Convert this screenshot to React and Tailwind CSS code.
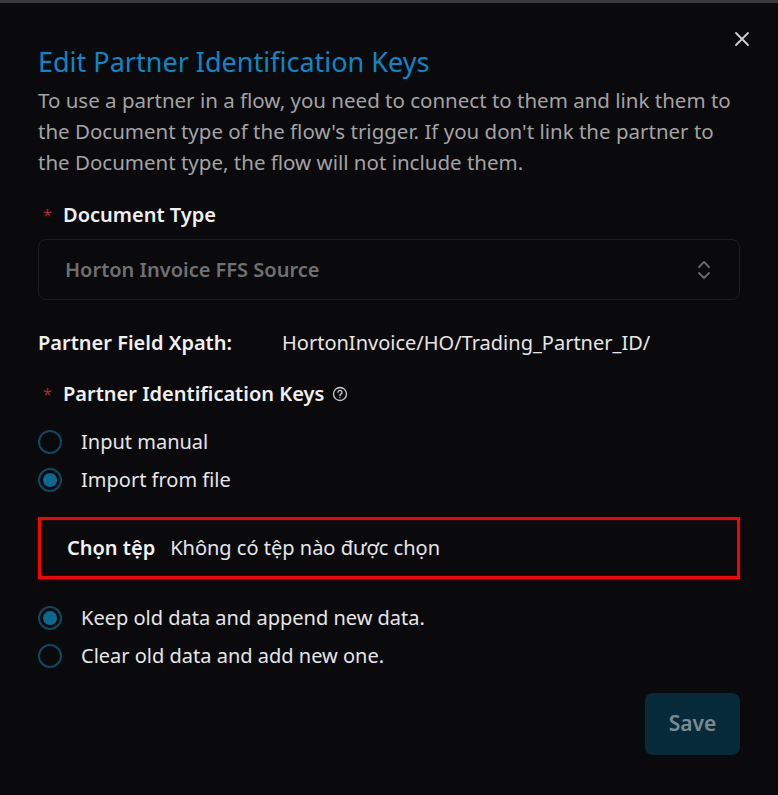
import React from "react";

function Radio({ checked, label }) {
  return (
    <label className="flex items-center gap-[19px] h-[38px]">
      <span className="w-[24px] h-[24px] rounded-full border-2 border-[#0c4a63] flex items-center justify-center shrink-0">
        {checked && <span className="w-[14px] h-[14px] rounded-full bg-[#0b6a92]" />}
      </span>
      <span className="text-[20px] text-[#e6e6e6]">{label}</span>
    </label>
  );
}

export default function App() {
  return (
    <div
      className="w-[778px] h-[795px] bg-[#0a0a0c] border-t-[3px] border-[#3a3a3c] relative"
      style={{ fontFamily: '"Noto Sans", "Open Sans", sans-serif' }}
    >
      <button className="absolute right-[28px] top-[28px] text-[#cfcfcf]">
        <svg width="16" height="16" viewBox="0 0 16 16" fill="none" stroke="currentColor" strokeWidth="1.8" strokeLinecap="round">
          <path d="M2 2L14 14M14 2L2 14" />
        </svg>
      </button>
      <div className="px-[38px] pt-[42px]">
        <h2 className="text-[27px] leading-[34px] text-[#0b87c8] font-normal">Edit Partner Identification Keys</h2>
        <p className="mt-[6px] text-[20.5px] leading-[31px] text-[#a3a3a3]">
          To use a partner in a flow, you need to connect to them and link them to the Document type of the flow's trigger. If you don't link the partner to the Document type, the flow will not include them.
        </p>

        <div className="mt-[23px] flex items-center h-[28px]">
          <span className="text-[#b3262c] text-[16px] w-[25px] pl-[5px]">*</span>
          <span className="text-[20px] font-semibold text-[#f0f0f0]">Document Type</span>
        </div>
        <div className="mt-[10px] h-[61px] rounded-[8px] border border-[#1e1e22] flex items-center justify-between pl-[26px] pr-[28px]">
          <span className="text-[20px] font-semibold text-[#707070]">Horton Invoice FFS Source</span>
          <svg width="14" height="20" viewBox="0 0 14 20" fill="none" stroke="#6a6a6a" strokeWidth="1.8" strokeLinecap="round" strokeLinejoin="round">
            <path d="M2 7L7 2L12 7M2 13L7 18L12 13" />
          </svg>
        </div>

        <div className="mt-[29px] flex items-center h-[28px]">
          <span className="text-[20px] font-semibold text-[#f0f0f0] w-[244px]">Partner Field Xpath:</span>
          <span className="text-[20px] text-[#e6e6e6]">HortonInvoice/HO/Trading_Partner_ID/</span>
        </div>

        <div className="mt-[23px] flex items-center h-[28px]">
          <span className="text-[#b3262c] text-[16px] w-[25px] pl-[5px]">*</span>
          <span className="text-[20px] font-semibold text-[#f0f0f0]">Partner Identification Keys</span>
          <svg className="ml-[8px]" width="16" height="16" viewBox="0 0 16 16" fill="none" stroke="#cfcfcf" strokeWidth="1.3">
            <circle cx="8" cy="8" r="6.5" />
            <path d="M6 6.3a2 2 0 1 1 2.6 1.9c-.4.2-.6.5-.6.9v.6" strokeLinecap="round" />
            <circle cx="8" cy="11.6" r="0.6" fill="#cfcfcf" stroke="none" />
          </svg>
        </div>

        <div className="mt-[15px] flex flex-col">
          <Radio label="Input manual" />
          <Radio checked label="Import from file" />
        </div>

        <div className="mt-[18px] h-[62px] border-[3px] border-[#ff0000] flex items-center pl-[26px] gap-[15px]">
          <span className="text-[20px] font-semibold text-[#f2f2f2]">Chọn tệp</span>
          <span className="text-[20px] text-[#e6e6e6]">Không có tệp nào được chọn</span>
        </div>

        <div className="mt-[20px] flex flex-col">
          <Radio checked label="Keep old data and append new data." />
          <Radio label="Clear old data and add new one." />
        </div>

        <div className="mt-[18px] flex justify-end">
          <button className="w-[95px] h-[62px] rounded-[8px] bg-[#062a3a] text-[21px] font-semibold text-[#7a8a90]">Save</button>
        </div>
      </div>
    </div>
  );
}
